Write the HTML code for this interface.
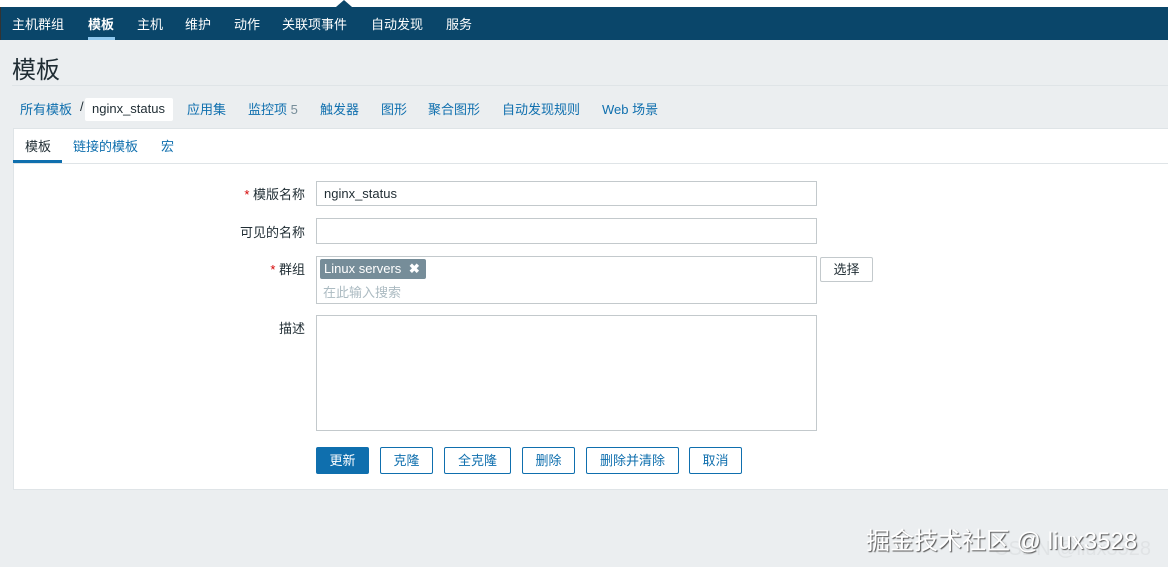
<!DOCTYPE html>
<html><head><meta charset="utf-8"><style>
*{margin:0;padding:0;box-sizing:border-box}
body{width:1168px;height:567px;overflow:hidden;background:#ebeef0;font-family:"Liberation Sans","Noto Sans CJK SC",sans-serif;font-size:13px;color:#1f2c33;position:relative}
.a{position:absolute}
.top{left:0;top:0;width:1168px;height:7px;background:#fff}
.nav{left:0;top:7px;width:1168px;height:33px;background:#0a466a;border-left:1px solid #333}
.nav span{position:absolute;top:7px;color:#fff;font-size:13px}
.title{left:12px;top:50px;font-size:24px;color:#1f2c33}
.hr{left:12px;top:85px;width:1156px;height:1px;background:#dfe4e7}
.bc{top:99px;color:#0f6fae;font-size:13px}
.panel{left:13px;top:128px;width:1155px;height:362px;background:#fff;border:1px solid #dfe4e7;border-right:none}
.lbl{font-size:13px;color:#1f2c33;text-align:right;width:200px;left:105px}
.star{color:#d40000}
.inp{left:316px;width:501px;border:1px solid #c3c9cc;background:#fff}
.btn{top:447px;height:27px;border:1px solid #0f6fae;border-radius:2px;color:#0f6fae;background:#fff;text-align:center;line-height:25px;font-size:13px}
</style></head><body>
<div class="a top"></div>
<div class="a" style="left:336px;top:0;width:0;height:0;border-left:8px solid transparent;border-right:8px solid transparent;border-bottom:7px solid #0a466a"></div>
<div class="a nav">
<span style="left:11px">主机群组</span>
<span style="left:87px;font-weight:bold">模板</span>
<div class="a" style="left:87px;top:30px;width:27px;height:3px;background:#8fc8ee"></div>
<span style="left:136px">主机</span>
<span style="left:184px">维护</span>
<span style="left:233px">动作</span>
<span style="left:281px">关联项事件</span>
<span style="left:370px">自动发现</span>
<span style="left:445px">服务</span>
</div>
<div class="a title">模板</div>
<div class="a hr"></div>
<span class="a bc" style="left:20px">所有模板</span>
<span class="a bc" style="left:80px;color:#1f2c33">/</span>
<div class="a" style="left:85px;top:98px;width:88px;height:23px;background:#fff;border-radius:2px"></div>
<span class="a bc" style="left:92px;top:101px;color:#1f2c33">nginx_status</span>
<span class="a bc" style="left:187px">应用集</span>
<span class="a bc" style="left:248px">监控项 <span style="color:#768d99">5</span></span>
<span class="a bc" style="left:320px">触发器</span>
<span class="a bc" style="left:381px">图形</span>
<span class="a bc" style="left:428px">聚合图形</span>
<span class="a bc" style="left:502px">自动发现规则</span>
<span class="a bc" style="left:602px">Web 场景</span>
<div class="a panel"></div>
<div class="a" style="left:13px;top:163px;width:1155px;height:1px;background:#dfe4e7"></div>
<span class="a" style="left:25px;top:136px">模板</span>
<div class="a" style="left:13px;top:160px;width:49px;height:3px;background:#0f6fae"></div>
<span class="a" style="left:73px;top:136px;color:#0f6fae">链接的模板</span>
<span class="a" style="left:161px;top:136px;color:#0f6fae">宏</span>
<div class="a lbl" style="top:184px"><span class="star">*</span> 模版名称</div>
<div class="a inp" style="top:181px;height:25px;padding:4px 7px">nginx_status</div>
<div class="a lbl" style="top:222px">可见的名称</div>
<div class="a inp" style="top:218px;height:26px"></div>
<div class="a lbl" style="top:259px"><span class="star">*</span> 群组</div>
<div class="a inp" style="top:256px;height:48px"></div>
<div class="a" style="left:320px;top:259px;width:106px;height:20px;background:#768d99;border-radius:2px;color:#fff;padding:2px 4px">Linux servers <b style="margin-left:4px">✖</b></div>
<span class="a" style="left:323px;top:282px;color:#acbbc2">在此输入搜索</span>
<div class="a" style="left:820px;top:257px;width:53px;height:25px;border:1px solid #c3c9cc;border-radius:2px;text-align:center;line-height:23px">选择</div>
<div class="a lbl" style="top:318px">描述</div>
<div class="a inp" style="top:315px;height:116px"></div>
<div class="a btn" style="left:316px;width:53px;background:#0f6fae;color:#fff">更新</div>
<div class="a btn" style="left:380px;width:53px">克隆</div>
<div class="a btn" style="left:444px;width:67px">全克隆</div>
<div class="a btn" style="left:522px;width:53px">删除</div>
<div class="a btn" style="left:586px;width:93px">删除并清除</div>
<div class="a btn" style="left:689px;width:53px">取消</div>
<span class="a" style="left:994px;top:538px;font-size:20px;color:#e0e3e5">CSDN @liux3528</span>
<span class="a" style="left:866px;top:521px;font-size:24px;color:#fff;text-shadow:1px 1px 1px #555">掘金技术社区 @ liux3528</span>
</body></html>
